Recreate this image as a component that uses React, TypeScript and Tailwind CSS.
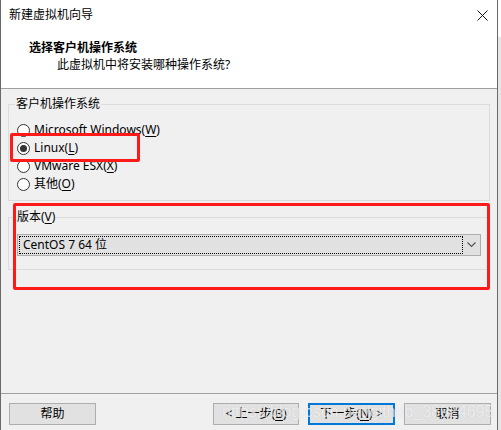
import React from "react";

const font = { fontFamily: '"Noto Sans", "Noto Sans CJK SC", sans-serif' };

function U({ c }: { c: string }) {
  return <span className="underline underline-offset-[2px]">{c}</span>;
}

function Radio({ checked, children }: { checked?: boolean; children: React.ReactNode }) {
  return (
    <div className="flex h-[18px] items-center gap-[4px]">
      <div className="flex h-[13px] w-[13px] items-center justify-center rounded-full border border-[#333333] bg-white">
        {checked && <div className="h-[7px] w-[7px] rounded-full bg-[#333333]" />}
      </div>
      <span className="text-[12px] leading-none text-black">{children}</span>
    </div>
  );
}

export default function App() {
  return (
    <div className="relative flex h-[430px] w-[501px] overflow-hidden bg-[#f0f0f0]" style={font}>
      <div className="flex h-[430px] w-[498px] flex-col border-x border-[#6a6a6a] bg-[#f0f0f0]">
        {/* title bar */}
        <div className="flex h-[30px] items-center justify-between bg-white pl-[8px] pr-[9px]">
          <span className="text-[12px] text-black">新建虚拟机向导</span>
          <svg width="11" height="11" viewBox="0 0 11 11">
            <path d="M0.5 0.5 L10.5 10.5 M10.5 0.5 L0.5 10.5" stroke="#111" strokeWidth="1" />
          </svg>
        </div>
        {/* header */}
        <div className="flex h-[59px] flex-col border-b border-[#a0a0a0] bg-white">
          <div className="mt-[10px] pl-[28px] text-[12px] font-bold leading-[16px] text-black">选择客户机操作系统</div>
          <div className="mt-[1px] pl-[56px] text-[12px] leading-[16px] text-black">此虚拟机中将安装哪种操作系统?</div>
        </div>
        {/* body */}
        <div className="flex h-[304px] flex-col px-[7px] pt-[15px]">
          <div className="relative h-[97px] border border-[#dcdcdc] pl-[8px] pt-[16px]">
            <span className="absolute -top-[9px] left-[6px] bg-[#f0f0f0] px-[1px] text-[12px] leading-[16px] text-black">客户机操作系统</span>
            <Radio>Microsoft Windows(<U c="W" />)</Radio>
            <Radio checked>Linux(<U c="L" />)</Radio>
            <Radio>VMware ESX(<U c="X" />)</Radio>
            <Radio>其他(<U c="O" />)</Radio>
          </div>
          <div className="relative mt-[16px] h-[53px] border border-[#dcdcdc] pl-[8px] pt-[16px]">
            <span className="absolute -top-[9px] left-[7px] bg-[#f0f0f0] px-[1px] text-[12px] leading-[16px] text-black">
              版本(<U c="V" />)
            </span>
            <div className="flex h-[22px] w-[464px] items-center border border-[#adadad] bg-[#e1e1e1] p-[1px]">
              <div className="flex h-[18px] w-[444px] items-center border border-dotted border-black pl-[3px] text-[12px] leading-none text-black">
                CentOS 7 64 位
              </div>
              <div className="flex flex-1 items-center justify-center">
                <svg width="9" height="6" viewBox="0 0 9 6">
                  <path d="M0.5 0.5 L4.5 4.5 L8.5 0.5" fill="none" stroke="#555" strokeWidth="1.2" />
                </svg>
              </div>
            </div>
          </div>
        </div>
        {/* footer */}
        <div className="flex flex-1 items-start border-t border-[#a0a0a0] pl-[8px] pr-[6px] pt-[9px]">
          <button className="flex h-[22px] w-[87px] items-center justify-center border border-[#adadad] bg-[#e1e1e1] text-[12px] text-black">
            帮助
          </button>
          <div className="ml-auto flex gap-[9px]">
            <button className="flex h-[22px] w-[86px] items-center justify-center border border-[#adadad] bg-[#e1e1e1] text-[12px] text-black">
              &lt; 上一步(<U c="B" />)
            </button>
            <button className="flex h-[22px] w-[87px] items-center justify-center border-2 border-[#0078d7] bg-[#e1e1e1] text-[12px] text-black">
              下一步(<U c="N" />) &gt;
            </button>
            <button className="flex h-[22px] w-[87px] items-center justify-center border border-[#adadad] bg-[#e1e1e1] text-[12px] text-black">
              取消
            </button>
          </div>
        </div>
      </div>
      <div className="flex w-[3px] flex-col">
        <div className="h-[37px] bg-white" />
        <div className="flex-1 bg-[#e6e6e6]" />
      </div>

      {/* red annotation boxes */}
      <div className="pointer-events-none absolute left-[10px] top-[133px] h-[29px] w-[130px] rounded-[2px] border-[3px] border-[#ff1a1a]" />
      <div className="pointer-events-none absolute left-[13px] top-[203px] h-[87px] w-[477px] rounded-[2px] border-[3px] border-[#ff1a1a]" />

      {/* watermark */}
      <div
        className="pointer-events-none absolute left-[222px] top-[402px] text-[16px] leading-[20px] text-white/70"
        style={{ fontFamily: '"Liberation Sans", sans-serif', textShadow: "0 0 1px rgba(0,0,0,0.15)" }}
      >
        https://blog.csdn.net/github_38924695
      </div>
    </div>
  );
}
